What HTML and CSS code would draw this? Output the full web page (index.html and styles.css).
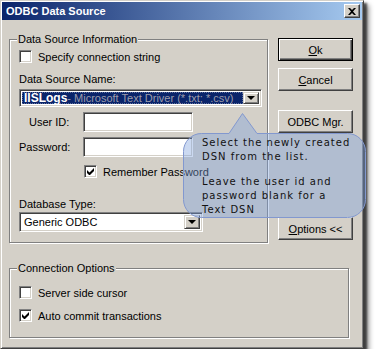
FILE: index.html
```html
<!DOCTYPE html>
<html lang="en">
<head>
  <meta charset="UTF-8">
  <title>ODBC Data Source</title>
  <link rel="stylesheet" href="styles.css">
</head>
<body>
  <div class="window">
    <div class="titlebar">
      <span class="title">ODBC Data Source</span>
      <span class="close">
        <svg width="8" height="7" viewBox="0 0 8 7"><path d="M0 0h2l2 2 2-2h2L5 3.5 8 7H6L4 5 2 7H0l3-3.5z" fill="#000"/></svg>
      </span>
    </div>
    <div class="client">
      <div class="top">
        <fieldset class="group info">
          <legend>Data Source Information</legend>
          <label class="check"><span class="box"></span>Specify connection string</label>
          <div class="caption dsn-caption">Data Source Name:</div>
          <div class="combo dsn">
            <span class="combo-text selected"><b>IISLogs</b><span class="driver"> - Microsoft Text Driver (*.txt; *.csv)</span></span>
            <span class="drop"><span class="arrow"></span></span>
          </div>
          <div class="field user">
            <span class="field-label">User ID:</span>
            <span class="edit"></span>
          </div>
          <div class="field pass">
            <span class="field-label">Password:</span>
            <span class="edit"></span>
          </div>
          <label class="check remember">
            <span class="box">
              <svg width="7" height="7" viewBox="0 0 7 7"><path d="M0 2v3l2 2h1l4-4V0L2.5 4.5z" fill="#000"/></svg>
            </span>Remember Password
          </label>
          <div class="caption db-caption">Database Type:</div>
          <div class="combo dbtype">
            <span class="combo-text">Generic ODBC</span>
            <span class="drop"><span class="arrow"></span></span>
          </div>
        </fieldset>
        <div class="buttons">
          <button class="btn default"><u>O</u>k</button>
          <button class="btn cancel"><u>C</u>ancel</button>
          <button class="btn mgr">ODBC Mgr.</button>
          <button class="btn options"><u>O</u>ptions &lt;&lt;</button>
        </div>
      </div>
      <fieldset class="group conn">
        <legend>Connection Options</legend>
        <label class="check"><span class="box"></span>Server side cursor</label>
        <label class="check auto">
          <span class="box">
            <svg width="7" height="7" viewBox="0 0 7 7"><path d="M0 2v3l2 2h1l4-4V0L2.5 4.5z" fill="#000"/></svg>
          </span>Auto commit transactions
        </label>
      </fieldset>
    </div>
    <div class="balloon">
      <svg class="balloon-shape" width="190" height="108" viewBox="0 0 190 108">
        <path d="M18.5 20.5H46L59.5 0.5 74 20.5H164.5A18 18 0 0 1 182.5 38.5V86.5A18 18 0 0 1 164.5 104.5H18.5A18 18 0 0 1 0.5 86.5V38.5A18 18 0 0 1 18.5 20.5Z" fill="rgba(125,160,220,0.4)" stroke="#8298cf" stroke-width="1"/>
      </svg>
      <div class="balloon-text">
        <p>Select the newly created<br>DSN from the list.</p>
        <p>Leave the user id and<br>password blank for a<br>Text DSN</p>
      </div>
    </div>
  </div>
</body>
</html>
```

FILE: styles.css
```css
* {
  box-sizing: border-box;
}
body {
  margin: 0;
  background: #fff;
  font-family: 'Liberation Sans', Arial, sans-serif;
  font-size: 11px;
  color: #000;
}
.window {
  position: relative;
  width: 364px;
  height: 349px;
  background: #d4d0c8;
  border: 1px solid;
  border-color: #d4d0c8 #404040 #404040 #d4d0c8;
  padding: 1px;
  box-shadow: inset 1px 1px #fff, inset -1px -1px #808080, 3px 3px 2px rgba(0, 0, 0, 0.6), 5px 5px 5px rgba(0, 0, 0, 0.4);
}
.titlebar {
  height: 18px;
  display: flex;
  align-items: center;
  justify-content: space-between;
  padding: 0 2px 0 4px;
  background: linear-gradient(to right, #0a246a, #a6caf0);
}
.title {
  color: #fff;
  font-weight: bold;
  font-size: 11px;
}
.close {
  width: 16px;
  height: 14px;
  display: flex;
  align-items: center;
  justify-content: center;
  background: #d4d0c8;
  border: 1px solid;
  border-color: #fff #404040 #404040 #fff;
  box-shadow: inset -1px -1px #808080;
}

/* client area */
.client {
  padding: 13px 0 0 7px;
}
.top {
  display: flex;
  gap: 10px;
}
.group {
  margin: 0;
  border: 1px solid #808080;
  box-shadow: 1px 1px 0 #fff, inset 1px 1px 0 #fff;
}
.group legend {
  padding: 0 1px;
  margin-left: -2px;
  height: 13px;
  line-height: 13px;
  background: #d4d0c8;
}
.info {
  width: 259px;
  height: 210px;
  padding: 4px 0 0 9px;
}
.conn {
  width: 340px;
  height: 76px;
  margin-top: 19px;
  padding: 11px 0 0 9px;
}

.check {
  display: flex;
  align-items: center;
  gap: 6px;
  height: 13px;
}
.box {
  width: 13px;
  height: 13px;
  display: flex;
  align-items: center;
  justify-content: center;
  background: #fff;
  border: 1px solid;
  border-color: #808080 #fff #fff #808080;
  box-shadow: inset 1px 1px #404040, inset -1px -1px #d4d0c8;
}
.remember {
  margin: 8px 0 0 65px;
}
.auto {
  margin-top: 10px;
}

.caption {
  height: 13px;
  line-height: 13px;
}
.dsn-caption {
  margin-top: 10px;
}
.db-caption {
  margin-top: 20px;
}

.combo {
  display: flex;
  align-items: stretch;
  height: 18px;
  margin-top: 3px;
  padding: 2px;
  background: #fff;
  border: 1px solid;
  border-color: #808080 #fff #fff #808080;
  box-shadow: inset 1px 1px #404040, inset -1px -1px #d4d0c8;
}
.dsn {
  width: 243px;
}
.dbtype {
  width: 184px;
  height: 20px;
  margin-top: 1px;
}
.combo-text {
  flex: 1;
  display: flex;
  align-items: center;
  padding-left: 2px;
  white-space: nowrap;
  overflow: hidden;
}
.selected {
  background: #0a246a;
  color: #fff;
  outline: 1px dotted rgba(255, 255, 255, 0.35);
  outline-offset: -1px;
}
.selected b {
  font-size: 12px;
}
.driver {
  color: #9c9cac;
}
.drop {
  width: 16px;
  display: flex;
  align-items: center;
  justify-content: center;
  background: #d4d0c8;
  border: 1px solid;
  border-color: #d4d0c8 #404040 #404040 #d4d0c8;
  box-shadow: inset 1px 1px #fff, inset -1px -1px #808080;
}
.arrow {
  width: 0;
  height: 0;
  border-left: 4px solid transparent;
  border-right: 4px solid transparent;
  border-top: 4px solid #000;
}

.field {
  display: flex;
  align-items: center;
  height: 20px;
  margin-top: 5px;
}
.field-label {
  width: 64px;
}
.user .field-label {
  padding-left: 10px;
}
.edit {
  width: 110px;
  height: 20px;
  background: #fff;
  border: 1px solid;
  border-color: #808080 #fff #fff #808080;
  box-shadow: inset 1px 1px #404040, inset -1px -1px #d4d0c8;
}

/* buttons */
.buttons {
  display: flex;
  flex-direction: column;
  width: 75px;
  padding-top: 5px;
}
.btn {
  height: 23px;
  padding: 0;
  font-family: inherit;
  font-size: 11px;
  color: #000;
  background: #d4d0c8;
  border: 1px solid;
  border-color: #fff #404040 #404040 #fff;
  box-shadow: inset -1px -1px #808080;
}
.default {
  border: 1px solid #000;
  box-shadow: inset 1px 1px #fff, inset -1px -1px #404040, inset -2px -2px #808080;
}
.cancel {
  margin-top: 7px;
}
.mgr {
  margin-top: 19px;
}
.options {
  margin-top: 84px;
}

/* tooltip balloon */
.balloon {
  position: absolute;
  left: 182px;
  top: 112px;
  width: 190px;
  height: 108px;
}
.balloon-shape {
  display: block;
}
.balloon-text {
  position: absolute;
  left: 19px;
  top: 23px;
  font-family: 'DejaVu Sans', Verdana, sans-serif;
  font-size: 10px;
  line-height: 14px;
  letter-spacing: 1px;
  color: #111;
}
.balloon-text p {
  margin: 0 0 11px;
}
```
